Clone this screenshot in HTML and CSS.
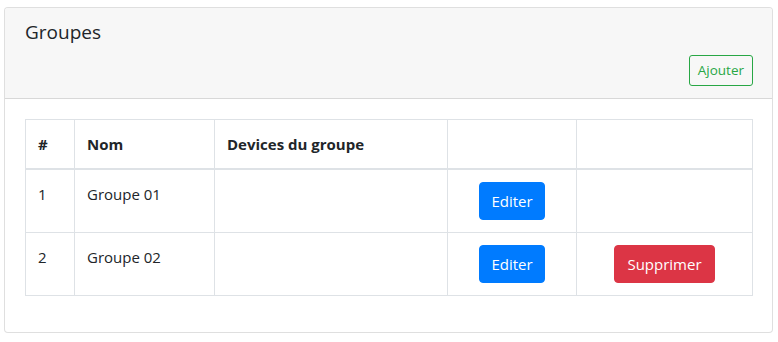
FILE: index.html
```html
<!DOCTYPE html>
<html lang="fr">
<head>
<meta charset="utf-8">
<title>Groupes</title>
<link rel="stylesheet" href="styles.css">
</head>
<body>
<div class="card">
  <div class="card-header">
    <h5 class="card-title">Groupes</h5>
    <div class="header-actions">
      <button class="btn btn-sm btn-outline-success">Ajouter</button>
    </div>
  </div>
  <div class="card-body">
    <table class="table">
      <colgroup>
        <col class="c1"><col class="c2"><col class="c3"><col class="c4"><col class="c5">
      </colgroup>
      <thead>
        <tr><th>#</th><th>Nom</th><th>Devices du groupe</th><th></th><th></th></tr>
      </thead>
      <tbody>
        <tr>
          <td>1</td><td>Groupe 01</td><td></td>
          <td class="center"><button class="btn btn-primary">Editer</button></td>
          <td class="center"></td>
        </tr>
        <tr>
          <td>2</td><td>Groupe 02</td><td></td>
          <td class="center"><button class="btn btn-primary">Editer</button></td>
          <td class="center"><button class="btn btn-danger">Supprimer</button></td>
        </tr>
      </tbody>
    </table>
  </div>
</div>
</body>
</html>
```

FILE: styles.css
```css
* { box-sizing: border-box; }
body {
  margin: 0;
  padding: 7px 4px 0 4px;
  font-family: "Open Sans", "Noto Sans", sans-serif;
  font-size: 15px;
  line-height: 24px;
  color: #212529;
  background: #fff;
}
.card {
  width: 769px;
  border: 1px solid rgba(0,0,0,.125);
  border-radius: 4px;
  background: #fff;
}
.card-header {
  background: #f7f7f7;
  border-bottom: 1px solid rgba(0,0,0,.125);
  padding: 12px 19px 12px 20px;
  border-radius: 3px 3px 0 0;
}
.card-title {
  margin: 0 0 11px 0;
  font-size: 19px;
  font-weight: 500;
  line-height: 24px;
}
.header-actions {
  display: flex;
  justify-content: flex-end;
}
.card-body {
  padding: 20px 20px 36px 20px;
}
.table {
  width: 727px;
  table-layout: fixed;
  border-collapse: collapse;
}
.c1 { width: 49px; }
.c2 { width: 140px; }
.c3 { width: 233px; }
.c4 { width: 129px; }
.c5 { width: 176px; }
.table th, .table td {
  border: 1px solid #dee2e6;
  padding: 12px;
  vertical-align: top;
  text-align: left;
}
.table th {
  font-weight: 700;
}
.table thead th { border-bottom: 2px solid #dee2e6; }
.table td.center { text-align: center; }
.btn {
  display: inline-block;
  font-family: inherit;
  font-size: 15px;
  line-height: 24px;
  padding: 6px 12px;
  border: 1px solid transparent;
  border-radius: 4px;
  cursor: pointer;
  vertical-align: top;
}
.btn-primary { padding: 6px 11px; }
.btn-sm {
  font-size: 13.5px;
  line-height: 21px;
  padding: 4px 8px;
  border-radius: 3px;
}
.btn-outline-success {
  color: #28a745;
  border-color: #28a745;
  background: transparent;
}
.btn-primary {
  color: #fff;
  background: #007bff;
  border-color: #007bff;
}
.btn-danger {
  color: #fff;
  background: #dc3545;
  border-color: #dc3545;
}
```
